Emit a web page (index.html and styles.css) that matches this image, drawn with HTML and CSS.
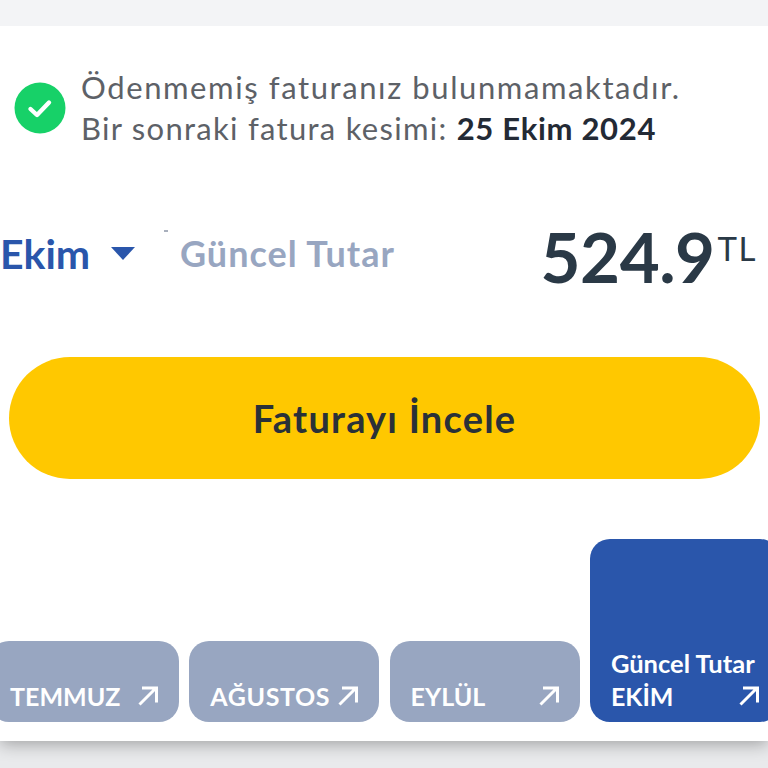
FILE: index.html
```html
<!DOCTYPE html>
<html lang="tr">

	<head>
		<meta charset="UTF-8">
		<title>Fatura</title>
		<link rel="stylesheet" href="styles.css">
	</head>

	<body>
		<div class="card">
			<div class="notice">
				<svg class="notice-icon" width="52" height="52" viewBox="0 0 52 52">
					<circle cx="26" cy="26" r="25.5" fill="#17d168" />
					<path d="M16.500 27l6.500 6L35 20.500" fill="none" stroke="#fff" stroke-width="4.400" stroke-linecap="round" stroke-linejoin="round" />
				</svg>
				<div class="notice-text">
					<p class="line-one">Ödenmemiş faturanız bulunmamaktadır.</p>
					<p class="line-two">Bir sonraki fatura kesimi: <b>25 Ekim 2024</b></p>
				</div>
			</div>

			<div class="summary">
				<div class="month">Ekim <span class="caret"></span></div>
				<span class="speck"></span>
				<div class="current">Güncel Tutar</div>
				<div class="amount">524.9<sup>TL</sup></div>
			</div>

			<button class="review">Faturayı İncele</button>

			<div class="tabs">
				<div class="tab">
					<div class="tab-row"><span>TEMMUZ</span>
						<svg width="20" height="20" viewBox="0 0 20 20"><path d="M1.500 18.500L18 2M4 2h14.500v14.500" /></svg>
					</div>
				</div>
				<div class="tab">
					<div class="tab-row"><span class="wide">AĞUSTOS</span>
						<svg width="20" height="20" viewBox="0 0 20 20"><path d="M1.500 18.500L18 2M4 2h14.500v14.500" /></svg>
					</div>
				</div>
				<div class="tab">
					<div class="tab-row"><span>EYLÜL</span>
						<svg width="20" height="20" viewBox="0 0 20 20"><path d="M1.500 18.500L18 2M4 2h14.500v14.500" /></svg>
					</div>
				</div>
				<div class="tab tab-active">
					<div class="tab-label">Güncel Tutar</div>
					<div class="tab-row"><span>EKİM</span>
						<svg width="20" height="20" viewBox="0 0 20 20"><path d="M1.500 18.500L18 2M4 2h14.500v14.500" /></svg>
					</div>
				</div>
			</div>
		</div>
	</body>

</html>
```

FILE: styles.css
```css
* {
	margin: 0;
	padding: 0;
	box-sizing: border-box;
}

html, body {
	height: 768px;
	overflow: hidden;
}

body {
	background-color: #e9eaec;
	font-family: Lato, "Noto Sans", sans-serif;
}

.card {
	height: 741px;
	padding-top: 41px;
	border-top: 26px solid #f3f4f6;
	background-color: #FFFFFF;
	box-shadow: 0 3px 16px rgba(0, 0, 0, 0.32);
	overflow: hidden;
	display: flex;
	flex-direction: column;
}

.notice {
	display: flex;
	align-items: center;
	gap: 15px;
	padding-left: 14px;
	height: 82px;
}

.notice-icon {
	flex-shrink: 0;
}

.notice-text {
	font-size: 31px;
	line-height: 41px;
	color: #5d6167;
	white-space: nowrap;
}

.line-one {
	letter-spacing: 1.6px;
}

.line-two {
	letter-spacing: 1.28px;
}

.notice-text b {
	color: #232a35;
	font-weight: 700;
	letter-spacing: 0.7px;
}

.summary {
	position: relative;
	display: flex;
	align-items: center;
	height: 80px;
	margin-top: 64px;
}

.month {
	width: 180px;
	display: flex;
	align-items: center;
	font-size: 41px;
	font-weight: 700;
	color: #2a56ab;
}

.caret {
	width: 0;
	height: 0;
	margin-left: 21px;
	border-left: 12px solid transparent;
	border-right: 12px solid transparent;
	border-top: 13px solid #2a56ab;
}

.speck {
	position: absolute;
	left: 164px;
	top: 17px;
	width: 4px;
	height: 2px;
	background-color: #a9b0bd;
}

.current {
	font-size: 36px;
	font-weight: 700;
	color: #98a6c1;
	letter-spacing: 1px;
}

.amount {
	margin: 6px 11px 0 auto;
	font-size: 69px;
	font-weight: 700;
	color: #2a3946;
	display: flex;
	align-items: flex-start;
	letter-spacing: -0.5px;
}

.amount sup {
	font-size: 33px;
	font-weight: 400;
	line-height: 1;
	margin-top: 17px;
	margin-left: 3px;
	letter-spacing: 1.500px;
}

.review {
	display: block;
	width: 751px;
	height: 122px;
	margin: 64px 0 0 9px;
	border: 0;
	border-radius: 61px;
	background-color: #ffc800;
	color: #2a3138;
	font-family: inherit;
	font-size: 38px;
	font-weight: 700;
	letter-spacing: 1.2px;
}

.tabs {
	display: flex;
	align-items: flex-end;
	gap: 10.300px;
	margin: 60px 0 0 -11px;
	width: 800px;
}

.tab {
	width: 190px;
	flex-shrink: 0;
	height: 81px;
	padding: 0 21px 16px 21px;
	border-radius: 20px;
	background-color: #98a6c1;
	color: #FFFFFF;
	display: flex;
	flex-direction: column;
	justify-content: flex-end;
}

.tab-active {
	height: 183px;
	background-color: #2a56ab;
}

.tab-row {
	display: flex;
	align-items: center;
	justify-content: space-between;
	font-size: 25px;
	font-weight: 700;
	height: 20px;
}

.wide {
	letter-spacing: 0.6px;
}

.tab-label {
	font-size: 25.500px;
	font-weight: 700;
	white-space: nowrap;
	margin-bottom: 8px;
}

.tab svg {
	fill: none;
	stroke: #FFFFFF;
	stroke-width: 3;
	flex-shrink: 0;
}
```
